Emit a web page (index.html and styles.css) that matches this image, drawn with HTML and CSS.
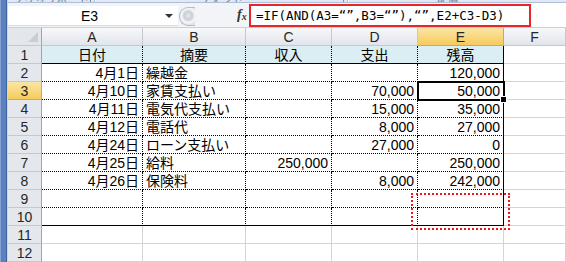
FILE: index.html
```html
<!DOCTYPE html>
<html lang="ja">
<head>
    <meta charset="UTF-8">
    <title>出納帳 - Excel</title>
    <link rel="stylesheet" href="styles.css">
</head>
<body>
    <div class="window">
        <div class="frame"></div>
        <div class="app">
            <div class="ribbon">
                <div class="group g-clip"><span class="group-label">クリップボード</span><span class="launcher"></span></div>
                <div class="group g-font"><span class="group-label">フォント</span><span class="launcher"></span></div>
                <div class="group g-align"><span class="group-label">配置</span></div>
            </div>
            <div class="formula-bar">
                <div class="name-box">
                    <span class="name">E3</span>
                    <span class="drop"></span>
                </div>
                <div class="splitter"></div>
                <div class="fx">f<sub>x</sub></div>
                <div class="formula">=IF(AND(A3=“”,B3=“”),“”,E2+C3-D3)</div>
                <div class="formula-rest"></div>
            </div>
            <div class="sheet">
                <div class="c corner"></div>
                <div class="c hd">A</div>
                <div class="c hd">B</div>
                <div class="c hd">C</div>
                <div class="c hd">D</div>
                <div class="c hd sel">E</div>
                <div class="c hd">F</div>

                <div class="c rh">1</div>
                <div class="c t tt ctr">日付</div>
                <div class="c t tt ctr">摘要</div>
                <div class="c t tt ctr">収入</div>
                <div class="c t tt ctr">支出</div>
                <div class="c t tt te ctr">残高</div>
                <div class="c"></div>

                <div class="c rh">2</div>
                <div class="c t num">4月1日</div>
                <div class="c t">繰越金</div>
                <div class="c t num"></div>
                <div class="c t num"></div>
                <div class="c t te num">120,000</div>
                <div class="c"></div>

                <div class="c rh sel">3</div>
                <div class="c t num">4月10日</div>
                <div class="c t">家賃支払い</div>
                <div class="c t num"></div>
                <div class="c t num">70,000</div>
                <div class="c t te num active">50,000</div>
                <div class="c"></div>

                <div class="c rh">4</div>
                <div class="c t num">4月11日</div>
                <div class="c t">電気代支払い</div>
                <div class="c t num"></div>
                <div class="c t num">15,000</div>
                <div class="c t te num">35,000</div>
                <div class="c"></div>

                <div class="c rh">5</div>
                <div class="c t num">4月12日</div>
                <div class="c t">電話代</div>
                <div class="c t num"></div>
                <div class="c t num">8,000</div>
                <div class="c t te num">27,000</div>
                <div class="c"></div>

                <div class="c rh">6</div>
                <div class="c t num">4月24日</div>
                <div class="c t">ローン支払い</div>
                <div class="c t num"></div>
                <div class="c t num">27,000</div>
                <div class="c t te num">0</div>
                <div class="c"></div>

                <div class="c rh">7</div>
                <div class="c t num">4月25日</div>
                <div class="c t">給料</div>
                <div class="c t num">250,000</div>
                <div class="c t num"></div>
                <div class="c t te num">250,000</div>
                <div class="c"></div>

                <div class="c rh">8</div>
                <div class="c t num">4月26日</div>
                <div class="c t">保険料</div>
                <div class="c t num"></div>
                <div class="c t num">8,000</div>
                <div class="c t te num">242,000</div>
                <div class="c"></div>

                <div class="c rh">9</div>
                <div class="c t"></div>
                <div class="c t"></div>
                <div class="c t"></div>
                <div class="c t"></div>
                <div class="c t te"></div>
                <div class="c"></div>

                <div class="c rh">10</div>
                <div class="c t tb"></div>
                <div class="c t tb"></div>
                <div class="c t tb"></div>
                <div class="c t tb"></div>
                <div class="c t tb te"></div>
                <div class="c"></div>

                <div class="c rh">11</div>
                <div class="c"></div>
                <div class="c"></div>
                <div class="c"></div>
                <div class="c"></div>
                <div class="c"></div>
                <div class="c"></div>

                <div class="c rh">12</div>
                <div class="c"></div>
                <div class="c"></div>
                <div class="c"></div>
                <div class="c"></div>
                <div class="c"></div>
                <div class="c"></div>

                <div class="blank-mark"></div>
            </div>
        </div>
    </div>
</body>
</html>
```

FILE: styles.css
```css
body { margin: 0; width: 566px; height: 262px; overflow: hidden; background: #fff; font-family: "Liberation Sans", "Noto Sans CJK JP", sans-serif; color: #000; }
.window { display: flex; height: 262px; }
.frame { width: 5px; background: #5a80bf; border-left: 1px solid #86a3d2; border-right: 1px solid #3f649f; box-shadow: 1px 0 0 #c6d6ec; margin-right: 1px; }
.app { flex: 1; min-width: 0; display: flex; flex-direction: column; }

/* ribbon strip, only the bottom of the group labels is visible */
.ribbon { height: 7px; background: #dfe8f4; border-bottom: 1px solid #aebfd6; display: flex; overflow: hidden; }
.group { position: relative; display: flex; justify-content: center; border-right: 1px solid #b3c4da; box-shadow: 1px 0 0 #f4f8fd; }
.g-clip { width: 86px; }
.g-font { width: 252px; }
.g-align { width: 200px; border-right: none; box-shadow: none; }
.group-label { font-size: 11px; line-height: 11px; margin-top: -5px; color: #6f819c; }
.launcher { position: absolute; right: 3px; top: 0; width: 4px; height: 4px; border-right: 1px solid #7d8da5; border-bottom: 1px solid #7d8da5; }

/* formula bar */
.formula-bar { height: 24px; background: #f2f4f7; border-bottom: 1px solid #c9d0da; display: flex; align-items: flex-start; }
.name-box { width: 170px; height: 19px; margin-top: 3px; background: #fff; border-bottom: 1px solid #d7dce3; display: flex; align-items: center; }
.name { flex: 1; text-align: center; font-size: 14px; padding-left: 6px; }
.drop { width: 0; height: 0; margin-right: 5px; border-left: 4px solid transparent; border-right: 4px solid transparent; border-top: 4px solid #333; }
.splitter { width: 15px; height: 17px; margin-top: 4px; margin-left: 1px; border: 1px solid #b6bcc6; border-right: none; border-radius: 9px 0 0 9px; background: radial-gradient(circle at 55% 45%, #e9ecf0 0, #c9ced6 4px, #f7f8fa 7px, #dfe3e8 9px); }
.fx { margin-left: 42px; margin-top: 3px; width: 12px; font-family: "Liberation Serif", serif; font-style: italic; font-weight: bold; font-size: 14px; line-height: 18px; color: #333; }
.fx sub { font-size: 10px; vertical-align: -1px; }
.formula { width: 273px; height: 19px; margin-top: 1px; padding-left: 5px; border: 2px solid #e5262b; background: #fff; font-family: "DejaVu Sans Mono", monospace; font-size: 12.5px; line-height: 20px; white-space: nowrap; }
.formula-rest { flex: 1; height: 24px; background: #fff; }

/* sheet grid */
.sheet { position: relative; display: grid; grid-template-columns: 34px 101px 103px 86px 86px 86px 1fr; grid-auto-rows: 18px; }
.c { box-sizing: border-box; border-right: 1px solid #d4d4d4; border-bottom: 1px solid #d4d4d4; font-size: 14px; line-height: 17px; padding: 1px 3px 0; white-space: nowrap; overflow: hidden; }
.hd { background: linear-gradient(#f7f8fa, #e1e5eb); border-color: #c2c9d3; text-align: center; color: #262626; padding-top: 1px; }
.corner { position: relative; background: #e3e7ec; border-color: #c2c9d3; border-right-color: #9aa6b6; }
.corner::after { content: ""; position: absolute; right: 3px; bottom: 3px; width: 0; height: 0; border-left: 10px solid transparent; border-bottom: 10px solid #c8ced6; }
.rh { background: #e4e8ed; border-color: #c2c9d3; border-right-color: #9aa6b6; text-align: center; color: #262626; padding-top: 1px; }
.sel { background: linear-gradient(#fbe5a6, #f6cb5c); border-color: #e2a43c; border-right-color: #e2a43c; }
.hd.sel { border-bottom: 1px solid #e2a43c; }

.t { border-right: 1px dotted #000; border-bottom: 1px dotted #000; }
.tt { background: #daeef3; border-bottom-style: solid; }
.tb { border-bottom-style: solid; }
.te { border-right-style: solid; }
.num { text-align: right; padding-right: 3px; }
.ctr { text-align: center; }

.active { position: relative; z-index: 1; overflow: visible; outline: 2px solid #000; outline-offset: -1px; }
.active::after { content: ""; position: absolute; right: -4px; bottom: -4px; width: 5px; height: 5px; background: #000; border: 1px solid #fff; }

/* red dotted mark around the empty result in E9:E10 */
.blank-mark { position: absolute; left: 403px; top: 165px; width: 95px; height: 33px; border: 2px dotted #f21818; }
```
